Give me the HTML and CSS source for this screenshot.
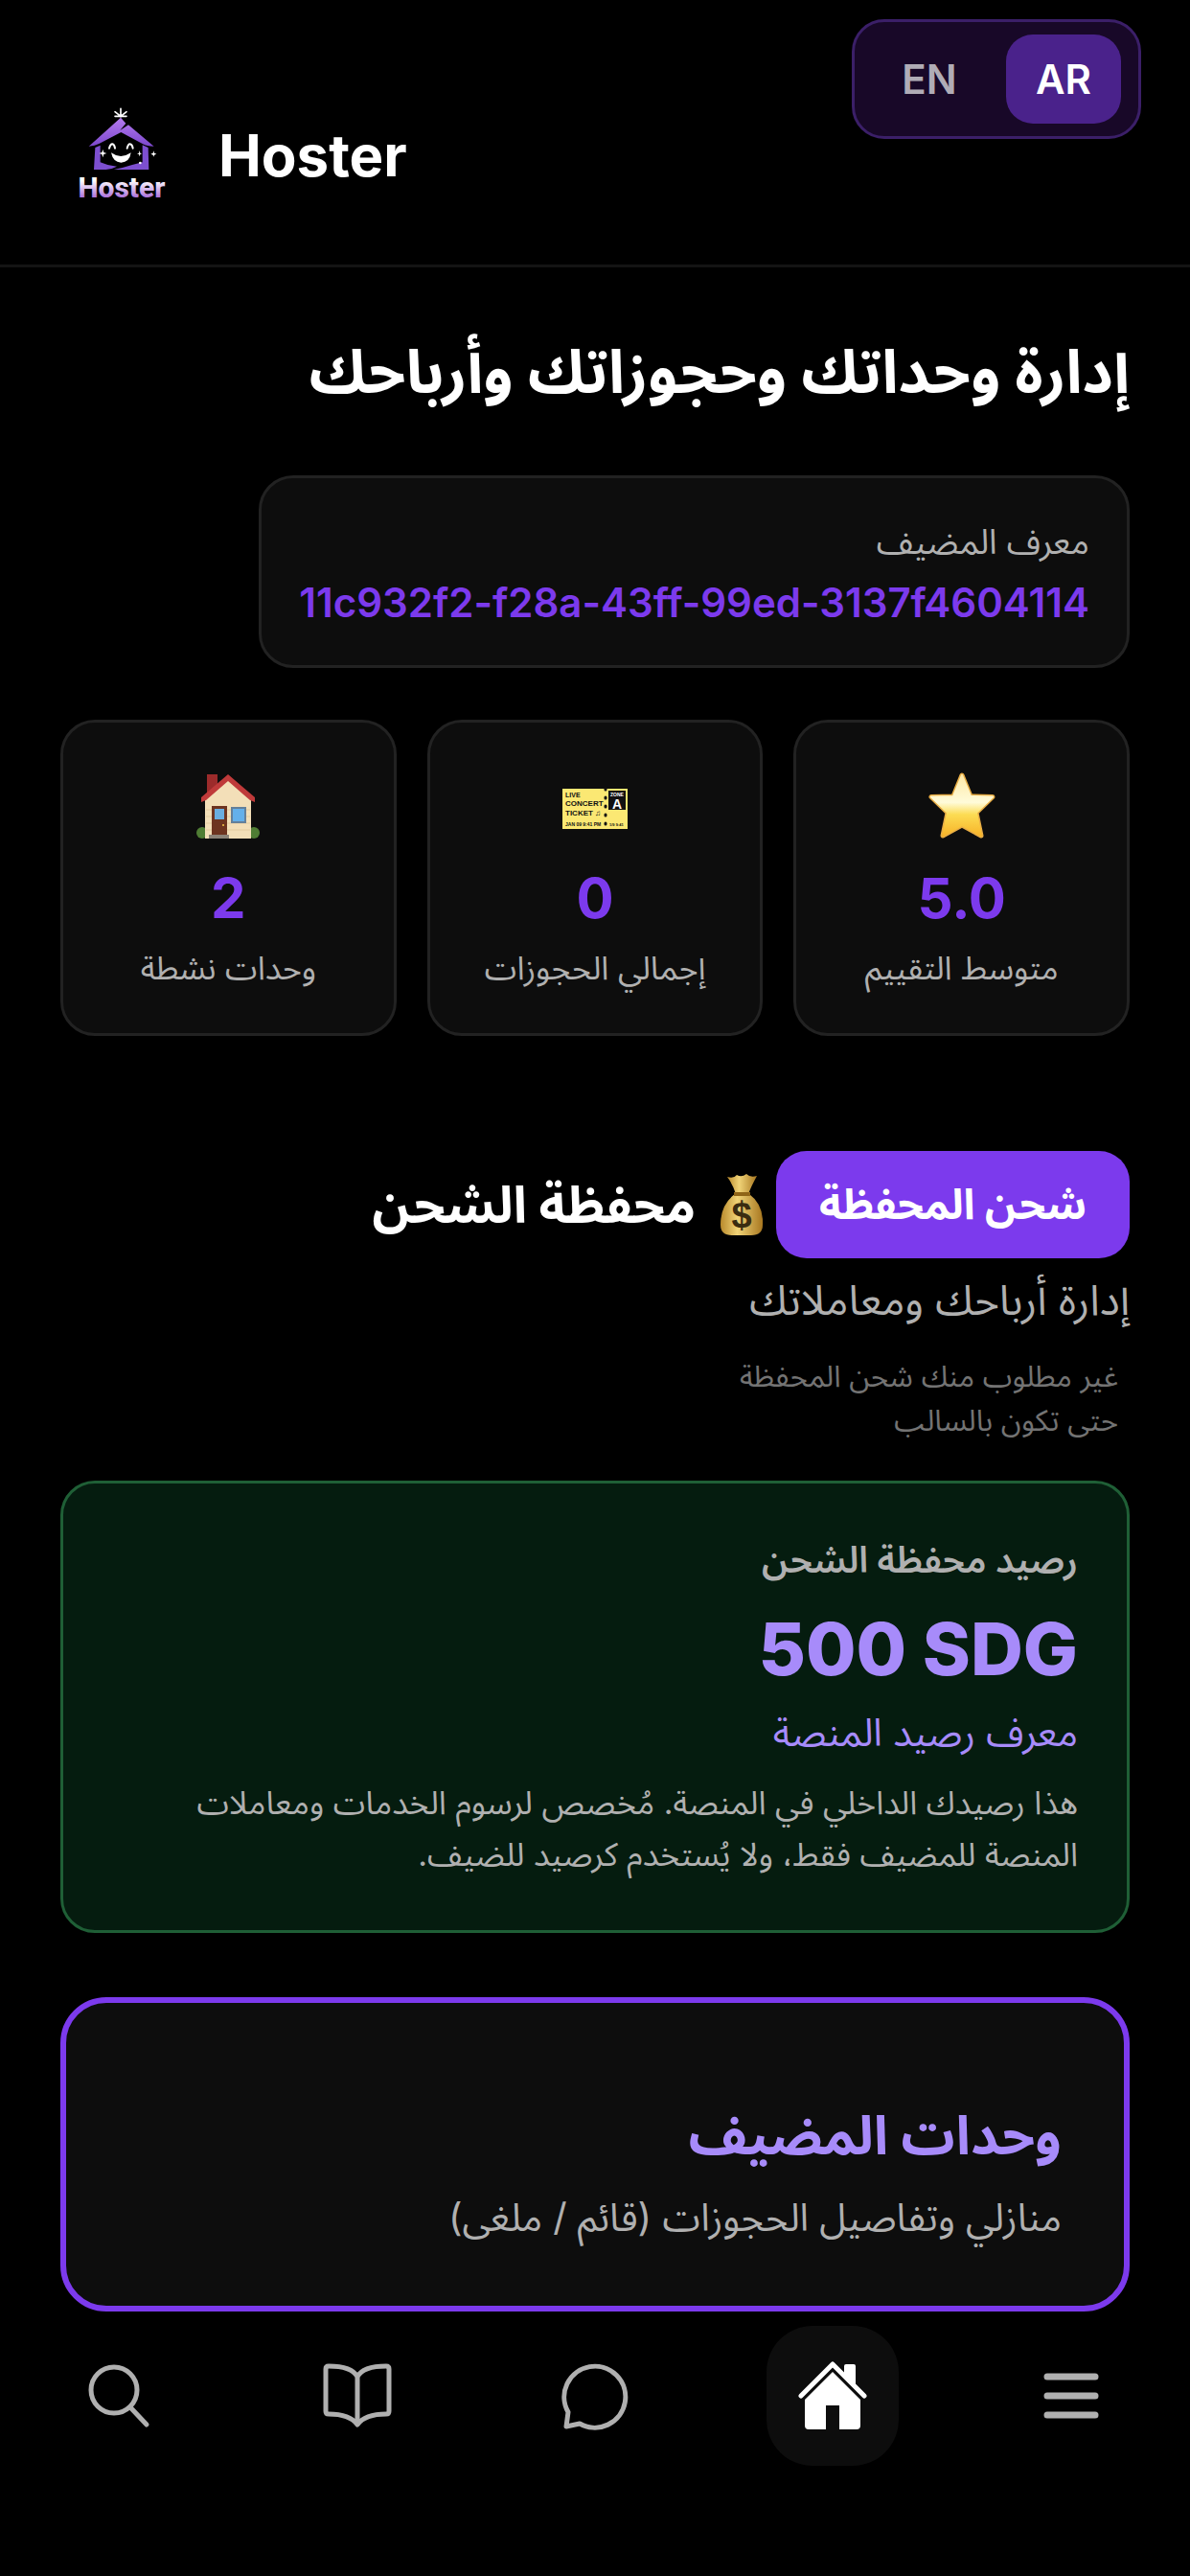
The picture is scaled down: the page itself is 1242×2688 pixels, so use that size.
FILE: index.html
```html
<!DOCTYPE html>
<html lang="ar" dir="rtl">
<head>
    <meta charset="UTF-8">
    <meta name="viewport" content="width=device-width, initial-scale=1.0">
    <title>Hoster</title>
    <link rel="stylesheet" href="styles.css">
</head>
<body>
    <header class="header" dir="ltr">
        <svg class="logo" viewBox="0 0 330 360" role="img" aria-label="Hoster logo">
            <defs>
                <linearGradient id="logo-roof" x1="0" y1="0" x2="0" y2="1">
                    <stop offset="0" stop-color="#b57bf0"/>
                    <stop offset="1" stop-color="#7c48cc"/>
                </linearGradient>
                <linearGradient id="logo-text" x1="0" y1="0" x2="0" y2="1">
                    <stop offset="0.3" stop-color="#ffffff"/>
                    <stop offset="0.85" stop-color="#a566d8"/>
                </linearGradient>
            </defs>
            <path d="M168 40v26M168 64l-18-14M168 64l18-14M168 64h-18M168 64h18" stroke="#fff" stroke-width="5" stroke-linecap="round" fill="none"/>
            <path d="M168 68L184 86L166 108L192 91L272 158Q250 158 236 150L169 114L100 150Q88 157 68 158Z" fill="url(#logo-roof)"/>
            <path d="M88 162L104 155L104 208Q130 220 156 221Q140 230 122 231L84 231Z" fill="#7d4fd0"/>
            <path d="M236 154L254 162L256 231L146 231Q180 224 204 216L236 208Z" fill="#7d4fd0"/>
            <path d="M132 164Q136 150 142 151Q148 152 150 164M188 164Q192 150 197 151Q204 152 206 164" stroke="#fff" stroke-width="6" stroke-linecap="round" fill="none"/>
            <path d="M138 178Q168 200 200 178Q196 208 169 209Q144 208 138 178Z" fill="#fff"/>
            <path d="M112 168L115 177L124 180L115 183L112 193L109 183L100 180L109 177Z" fill="#fff"/>
            <path d="M227 171L229 179L234 181L229 183L227 190L225 183L219 181L225 179Z" fill="#fff"/>
            <path d="M271 172L273 179L280 182L273 185L271 191L269 185L262 182L269 179Z" fill="#fff"/>
            <circle cx="229" cy="210" r="4" fill="#fff"/>
            <text class="logo-text" x="171" y="317" text-anchor="middle" fill="url(#logo-text)">Hoster</text>
        </svg>
        <span class="brand">Hoster</span>

        <div class="lang-switch">
            <button class="lang-btn" type="button">EN</button>
            <button class="lang-btn active" type="button">AR</button>
        </div>
    </header>

    <main class="content">
        <h1 class="page-title">إدارة وحداتك وحجوزاتك وأرباحك</h1>

        <div class="host-id">
            <div class="host-id-label">معرف المضيف</div>
            <div class="host-id-value" dir="ltr">11c932f2-f28a-43ff-99ed-3137f4604114</div>
        </div>

        <section class="stats">
            <div class="stat-card">
                <svg class="stat-icon" viewBox="0 0 78 78" aria-hidden="true">
                    <defs>
                        <linearGradient id="star-fill" x1="0" y1="0" x2="0" y2="1">
                            <stop offset="0" stop-color="#fde9a8"/>
                            <stop offset="0.45" stop-color="#fffbd9"/>
                            <stop offset="0.65" stop-color="#fcdc53"/>
                            <stop offset="1" stop-color="#f7b42a"/>
                        </linearGradient>
                    </defs>
                    <path d="M39 7L48 29L71 29.500L54 46L59 70L39 59L19 70L24 46L7 29.500L30 29Z" fill="url(#star-fill)" stroke="#e8ad45" stroke-width="5" stroke-linejoin="round"/>
                    <path d="M39 7L48 29L71 29.500L54 46L59 70L39 59L19 70L24 46L7 29.500L30 29Z" fill="url(#star-fill)" stroke="url(#star-fill)" stroke-width="2" stroke-linejoin="round"/>
                </svg>
                <div class="stat-value">5.0</div>
                <div class="stat-label">متوسط التقييم</div>
            </div>
            <div class="stat-card">
                <svg class="stat-icon" viewBox="0 0 78 78" aria-hidden="true">
                    <rect x="5" y="21" width="68" height="42" fill="#fbe873"/>
                    <rect x="53" y="23" width="18" height="20" fill="#111"/>
                    <path d="M50 21V63" stroke="#111" stroke-width="3" stroke-linecap="round" stroke-dasharray="1 8"/>
                    <g class="ticket-text" direction="ltr">
                        <text x="8" y="30" font-size="7">LIVE</text>
                        <text x="8" y="39" font-size="8">CONCERT</text>
                        <text x="8" y="49" font-size="8">TICKET ♫</text>
                        <text x="8" y="60" font-size="5">JAN 09 9:41 PM</text>
                        <text x="54" y="60" font-size="4">1/9 9:41</text>
                        <text x="55" y="29" font-size="5" fill="#fff">ZONE</text>
                        <text x="57" y="42" font-size="14" fill="#fff">A</text>
                    </g>
                </svg>
                <div class="stat-value">0</div>
                <div class="stat-label">إجمالي الحجوزات</div>
            </div>
            <div class="stat-card">
                <svg class="stat-icon" viewBox="0 0 78 78" aria-hidden="true">
                    <circle cx="12" cy="67" r="6" fill="#4f7d34"/>
                    <circle cx="66" cy="67" r="6" fill="#4f7d34"/>
                    <rect x="17" y="6" width="11" height="22" fill="#9c2b2b"/>
                    <path d="M15 32L39 10L63 32V73H15Z" fill="#f3dfb8"/>
                    <path d="M16 43H62M16 50H62M16 57H62M16 64H62" stroke="#e3cb9f"/>
                    <path d="M39 6L67 30V35L62 33L39 13L16 33L11 35V30Z" fill="#bf3a3a"/>
                    <rect x="22" y="39" width="16" height="31" fill="#6d3420"/>
                    <rect x="25" y="42" width="10" height="11" fill="#6aaee0"/>
                    <circle cx="34" cy="59" r="1" fill="#f7c948"/>
                    <rect x="42" y="40" width="16" height="17" fill="#64809a"/>
                    <rect x="44" y="42" width="12" height="13" fill="#64b0ea"/>
                    <rect x="19" y="69" width="21" height="4" fill="#8c8378"/>
                </svg>
                <div class="stat-value">2</div>
                <div class="stat-label">وحدات نشطة</div>
            </div>
        </section>

        <section class="wallet">
            <div class="wallet-head">
                <button class="charge-btn" type="button">شحن المحفظة</button>
                <h2 class="wallet-title">
                    <svg class="money-bag" viewBox="0 0 48 66" aria-hidden="true">
                        <defs>
                            <linearGradient id="bag-fill" x1="0" y1="0" x2="1" y2="0">
                                <stop offset="0" stop-color="#b98a2c"/>
                                <stop offset="0.4" stop-color="#f0d377"/>
                                <stop offset="1" stop-color="#a87720"/>
                            </linearGradient>
                        </defs>
                        <path d="M9 4Q16 6 19 2Q24 5 29 1Q33 5 40 3Q34 14 31 22H18Q15 12 9 4Z" fill="url(#bag-fill)"/>
                        <path d="M17 22H32Q47 33 46 54Q46 65 34 65H14Q2 65 2 54Q2 33 17 22Z" fill="url(#bag-fill)"/>
                        <path d="M16 20H33V24H16Z" fill="#8f6417"/>
                        <text class="bag-sign" x="24" y="57" text-anchor="middle">$</text>
                    </svg>
                    محفظة الشحن
                </h2>
            </div>
            <p class="wallet-subtitle">إدارة أرباحك ومعاملاتك</p>
            <p class="wallet-note">غير مطلوب منك شحن المحفظة<br>حتى تكون بالسالب</p>

            <div class="balance-card">
                <div class="balance-label">رصيد محفظة الشحن</div>
                <div class="balance-amount" dir="ltr">500 SDG</div>
                <a class="balance-link" href="#">معرف رصيد المنصة</a>
                <p class="balance-text">هذا رصيدك الداخلي في المنصة. مُخصص لرسوم الخدمات ومعاملات<br>المنصة للمضيف فقط، ولا يُستخدم كرصيد للضيف.</p>
            </div>
        </section>

        <a class="units-card" href="#">
            <h2 class="units-title">وحدات المضيف</h2>
            <p class="units-text">منازلي وتفاصيل الحجوزات (قائم / ملغى)</p>
        </a>
    </main>

    <nav class="bottom-nav">
        <a class="nav-item" href="#" aria-label="القائمة">
            <svg class="nav-icon" viewBox="0 0 72 72">
                <path d="M11 16H61M11 36H61M11 56H61" stroke="currentColor" stroke-width="7" stroke-linecap="round"/>
            </svg>
        </a>
        <a class="nav-item active" href="#" aria-label="الرئيسية">
            <svg class="nav-icon" viewBox="0 0 72 72" fill="currentColor">
                <path d="M3 36L36 3L69 36" fill="none" stroke="currentColor" stroke-width="5" stroke-linecap="round" stroke-linejoin="round"/>
                <path d="M48 5Q48 3 50 3H58Q60 3 60 5V27L48 15Z"/>
                <path d="M36 11L65 40V67Q65 71 61 71H43V46H29V71H11Q7 71 7 67V40Z"/>
            </svg>
        </a>
        <a class="nav-item" href="#" aria-label="الرسائل">
            <svg class="nav-icon" viewBox="0 0 72 72" fill="none" stroke="currentColor" stroke-width="5" stroke-linejoin="round" stroke-linecap="round">
                <path d="M20 65A32 32 0 1 0 8 53L6 68Z"/>
            </svg>
        </a>
        <a class="nav-item" href="#" aria-label="الحجوزات">
            <svg class="nav-icon" viewBox="0 0 72 72" fill="none" stroke="currentColor" stroke-width="5" stroke-linejoin="round" stroke-linecap="round">
                <path d="M36 16Q30 5 6 5Q3 5 3 8V52Q3 55 6 55Q28 55 36 66Q44 55 66 55Q69 55 69 52V8Q69 5 66 5Q42 5 36 16ZM36 16V65"/>
            </svg>
        </a>
        <a class="nav-item" href="#" aria-label="بحث">
            <svg class="nav-icon" viewBox="0 0 72 72" fill="none" stroke="currentColor" stroke-width="5" stroke-linecap="round">
                <circle cx="31" cy="30" r="24"/>
                <path d="M48 48L65 66"/>
            </svg>
        </a>
    </nav>
</body>
</html>
```
FILE: styles.css
```css
* {
    box-sizing: border-box;
    margin: 0;
    padding: 0;
}
body {
    display: flex;
    flex-direction: column;
    min-height: 100vh;
    background: #000;
    color: #fff;
    font-family: Inter, "Noto Sans Arabic", "DejaVu Sans", sans-serif;
}
button {
    border: 0;
    font-family: inherit;
    cursor: pointer;
}
a {
    color: inherit;
    text-decoration: none;
}

/* Header */
.header {
    position: relative;
    display: flex;
    align-items: center;
    gap: 48px;
    padding: 100px 70px 56px;
    border-bottom: 3px solid #141414;
}
.logo {
    width: 110px;
    height: 120px;
}
.logo-text {
    font-family: Roboto, sans-serif;
    font-size: 90px;
    font-weight: 800;
}
.brand {
    padding-top: 4px;
    font-size: 60px;
    font-weight: 700;
    line-height: 72px;
}
.lang-switch {
    position: absolute;
    top: 20px;
    right: 51px;
    display: flex;
    gap: 20px;
    padding: 13px 18px;
    background: #180828;
    border: 3px solid #3b1f68;
    border-radius: 34px;
}
.lang-btn {
    width: 120px;
    height: 93px;
    border-radius: 28px;
    background: transparent;
    color: #b0acb6;
    font-size: 42px;
    font-weight: 600;
}
.lang-btn.active {
    background: #4a228b;
    color: #fff;
}

.content {
    flex: 1;
    display: flex;
    flex-direction: column;
    padding: 66px 63px 0;
}
.page-title {
    margin-bottom: 67px;
    font-size: 63px;
    font-weight: 700;
    line-height: 84px;
}

/* Host id */
.host-id {
    align-self: flex-start;
    margin-bottom: 54px;
    padding: 35px 39px 33px;
    background: #0d0d0d;
    border: 3px solid #222;
    border-radius: 36px;
}
.host-id-label {
    color: #b0b0b0;
    font-size: 36px;
    line-height: 62px;
}
.host-id-value {
    color: #7c3aed;
    font-size: 42px;
    font-weight: 600;
    line-height: 65px;
}

/* Stats */
.stats {
    display: grid;
    grid-template-columns: repeat(3, 1fr);
    gap: 32px;
    margin-bottom: 120px;
}
.stat-card {
    display: flex;
    flex-direction: column;
    align-items: center;
    padding: 48px 12px 41px;
    background: #0d0d0d;
    border: 3px solid #222;
    border-radius: 36px;
}
.stat-icon {
    width: 78px;
    height: 78px;
    margin-bottom: 21px;
}
.ticket-text {
    fill: #111;
    font-family: "Liberation Sans", sans-serif;
    font-weight: 700;
}
.stat-value {
    margin-bottom: 10px;
    color: #7c3aed;
    font-size: 58px;
    font-weight: 700;
    line-height: 72px;
}
.stat-label {
    color: #b0b0b0;
    font-size: 34px;
    line-height: 54px;
    white-space: nowrap;
}

/* Wallet */
.wallet {
    margin-bottom: 67px;
}
.wallet-head {
    display: flex;
    align-items: center;
    gap: 12px;
}
.charge-btn {
    height: 112px;
    padding: 2px 45px 0;
    background: #7c3aed;
    border-radius: 32px;
    color: #fff;
    font-size: 44px;
    font-weight: 700;
}
.wallet-title {
    display: flex;
    align-items: center;
    gap: 24px;
    font-size: 53px;
    font-weight: 700;
    line-height: 72px;
    white-space: nowrap;
}
.money-bag {
    width: 48px;
    height: 66px;
}
.bag-sign {
    fill: #3a2c10;
    font-family: "Liberation Sans", sans-serif;
    font-size: 38px;
    font-weight: 700;
}
.wallet-subtitle {
    margin-top: 10px;
    color: #b0b0b0;
    font-size: 44px;
    line-height: 66px;
}
.wallet-note {
    margin: 24px 0 40px;
    padding: 0 12px;
    color: #737373;
    font-size: 31px;
    line-height: 46px;
}
.balance-card {
    padding: 52px 51px;
    background: #051c0f;
    border: 3px solid #1f5f36;
    border-radius: 36px;
}
.balance-label {
    margin-bottom: 21px;
    color: #b0b0b0;
    font-size: 38px;
    font-weight: 600;
    line-height: 54px;
}
.balance-amount {
    margin-bottom: 13px;
    color: #a78bfa;
    font-size: 76px;
    font-weight: 800;
    line-height: 90px;
    text-align: right;
}
.balance-link {
    display: block;
    margin-bottom: 16px;
    color: #a78bfa;
    font-size: 40px;
    line-height: 60px;
}
.balance-text {
    color: #b0b0b0;
    font-size: 34px;
    line-height: 54px;
}

/* Units */
.units-card {
    padding: 102px 65px 62px;
    background: #0d0d0d;
    border: 6px solid #7c3aed;
    border-radius: 48px;
}
.units-title {
    margin-bottom: 20px;
    color: #a78bfa;
    font-size: 56px;
    font-weight: 700;
    line-height: 72px;
}
.units-text {
    color: #b0b0b0;
    font-size: 40px;
    line-height: 60px;
}

/* Bottom navigation */
.bottom-nav {
    display: grid;
    grid-template-columns: repeat(5, 1fr);
    justify-items: center;
    padding: 14px 0 115px;
    background: #000;
}
.nav-item {
    display: flex;
    align-items: center;
    justify-content: center;
    width: 138px;
    height: 146px;
    border-radius: 48px;
    color: #b0b0b0;
}
.nav-item.active {
    background: #0d0d0d;
    color: #fff;
}
.nav-icon {
    width: 72px;
    height: 72px;
}
```
